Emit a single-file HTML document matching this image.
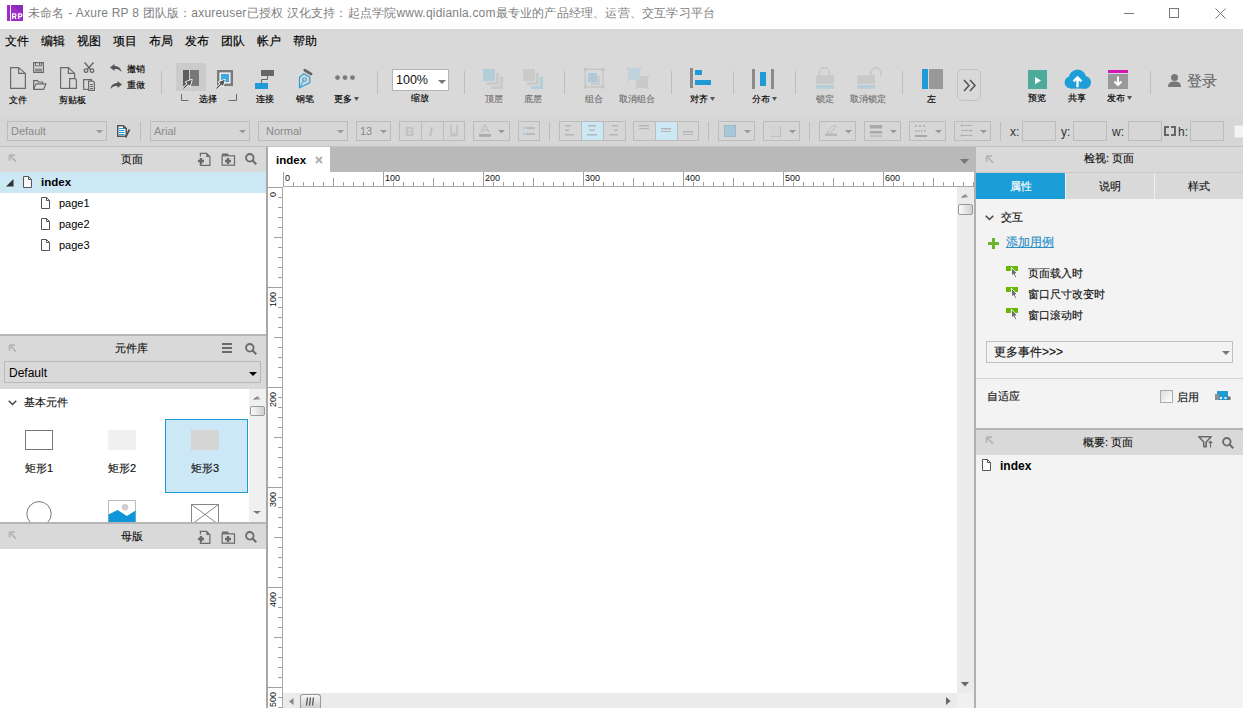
<!DOCTYPE html><html><head><meta charset="utf-8"><style>
html,body{margin:0;padding:0}
body{width:1243px;height:708px;overflow:hidden;position:relative;background:#d9d9d9;font-family:"Liberation Sans",sans-serif;color:#000}
.t{position:absolute;white-space:nowrap;line-height:1}
svg{display:block}
</style></head><body>
<div style="position:absolute;left:0px;top:0px;width:1243px;height:29px;background:#fff"></div>
<svg style="position:absolute;left:7px;top:5px;" width="16" height="16" viewBox="0 0 16 16"><rect x="0" y="0" width="3" height="16" fill="#9e2cc8"/><rect x="4" y="0" width="12" height="16" fill="#a02cc8"/><path d="M4.5 0H16V8Z" fill="#8a2bbd"/><path d="M5.6 14V8.8H7.6Q9 8.8 9 10.3Q9 11.7 7.6 11.7H5.6M7.6 11.7L9 14M11.6 14V8.8H13.4Q14.8 8.8 14.8 10.3Q14.8 11.7 13.4 11.7H11.6" fill="none" stroke="#fff" stroke-width="1.3"/></svg>
<div class="t" style="left:28px;top:7px;font-size:12px;color:#7f7f7f;letter-spacing:0.2px">未命名 - Axure RP 8 团队版：axureuser已授权 汉化支持：起点学院www.qidianla.com最专业的产品经理、运营、交互学习平台</div>
<div style="position:absolute;left:1124px;top:13px;width:10px;height:1px;background:#777"></div>
<div style="position:absolute;left:1169px;top:8px;width:10px;height:10px;box-sizing:border-box;border:1px solid #777"></div>
<svg style="position:absolute;left:1215px;top:8px;" width="11" height="11" viewBox="0 0 11 11"><path d="M0.5 0.5L10.5 10.5M10.5 0.5L0.5 10.5" stroke="#777" stroke-width="1"/></svg>
<div class="t" style="left:5px;top:35px;font-size:12px;-webkit-text-stroke:0.15px #000">文件</div>
<div class="t" style="left:41px;top:35px;font-size:12px;-webkit-text-stroke:0.15px #000">编辑</div>
<div class="t" style="left:77px;top:35px;font-size:12px;-webkit-text-stroke:0.15px #000">视图</div>
<div class="t" style="left:113px;top:35px;font-size:12px;-webkit-text-stroke:0.15px #000">项目</div>
<div class="t" style="left:149px;top:35px;font-size:12px;-webkit-text-stroke:0.15px #000">布局</div>
<div class="t" style="left:185px;top:35px;font-size:12px;-webkit-text-stroke:0.15px #000">发布</div>
<div class="t" style="left:221px;top:35px;font-size:12px;-webkit-text-stroke:0.15px #000">团队</div>
<div class="t" style="left:257px;top:35px;font-size:12px;-webkit-text-stroke:0.15px #000">帐户</div>
<div class="t" style="left:293px;top:35px;font-size:12px;-webkit-text-stroke:0.15px #000">帮助</div>
<svg style="position:absolute;left:10px;top:67px;" width="17" height="23" viewBox="0 0 17 23"><path d="M0.6 0.6H8.6L15.4 6.4V21.4H0.6Z M8.6 0.6V6.4H15.4" fill="none" stroke="#6a6a6a" stroke-width="1.2" stroke-linejoin="round"/></svg>
<svg style="position:absolute;left:33px;top:62px;" width="11" height="11" viewBox="0 0 11 11"><path d="M0.6 0.6H10.4V10.4H0.6Z" fill="none" stroke="#6a6a6a" stroke-width="1.2"/><path d="M2.5 1V3.8H8.5V1" fill="none" stroke="#6a6a6a" stroke-width="1"/><rect x="6" y="1" width="1.2" height="2" fill="#6a6a6a"/><rect x="2" y="6.5" width="7" height="3" fill="#8c8c8c"/></svg>
<svg style="position:absolute;left:33px;top:80px;" width="14" height="10" viewBox="0 0 14 10"><path d="M0.6 9.4V0.6H4.4L5.4 2H9.6V3.6" fill="none" stroke="#6a6a6a" stroke-width="1.2"/><path d="M0.6 9.4L2.8 3.8H13L10.6 9.4Z" fill="none" stroke="#6a6a6a" stroke-width="1.2" stroke-linejoin="round"/></svg>
<div class="t" style="left:9px;top:96px;font-size:9px;color:#000;-webkit-text-stroke:0.15px #000">文件</div>
<svg style="position:absolute;left:60px;top:67px;" width="18" height="23" viewBox="0 0 18 23"><path d="M0.6 21.4V0.6H8.4L14.6 6.4V11" fill="none" stroke="#6a6a6a" stroke-width="1.2"/><path d="M8.4 0.6V6.4H14.6" fill="none" stroke="#6a6a6a" stroke-width="1.2"/><path d="M0.6 21.4H9" fill="none" stroke="#6a6a6a" stroke-width="1.2"/><path d="M9.6 11.6H15.2L16.4 12.8V21.4H9.6Z" fill="#d9d9d9" stroke="#6a6a6a" stroke-width="1.2"/></svg>
<svg style="position:absolute;left:83px;top:62px;" width="12" height="11" viewBox="0 0 12 11"><path d="M1.5 0.5L7.5 7.2M10.5 0.5L4.5 7.2" stroke="#6a6a6a" stroke-width="1.5" fill="none"/><circle cx="3" cy="8.6" r="1.8" fill="none" stroke="#6a6a6a" stroke-width="1.3"/><circle cx="9" cy="8.6" r="1.8" fill="none" stroke="#6a6a6a" stroke-width="1.3"/></svg>
<svg style="position:absolute;left:83px;top:79px;" width="12" height="12" viewBox="0 0 12 12"><path d="M0.6 10.4V0.6H8.4V2" fill="none" stroke="#6a6a6a" stroke-width="1.2"/><path d="M0.6 10.4H5" fill="none" stroke="#6a6a6a" stroke-width="1.2"/><path d="M5.6 2.2H10L11.4 3.6V11.4H5.6Z" fill="#d9d9d9" stroke="#6a6a6a" stroke-width="1.2"/><path d="M7 5.5H10M7 7.5H10M7 9.5H10" stroke="#6a6a6a" stroke-width="1"/></svg>
<div class="t" style="left:59px;top:96px;font-size:9px;color:#000;-webkit-text-stroke:0.15px #000">剪贴板</div>
<svg style="position:absolute;left:110px;top:64px;" width="12" height="8" viewBox="0 0 12 8"><path d="M0 3.5L4.5 0V2C8 2 11 4 11.5 8C9.5 5.5 7.5 5 4.5 5V7Z" fill="#555"/></svg>
<div class="t" style="left:127px;top:65px;font-size:9px;color:#000;-webkit-text-stroke:0.15px #000">撤销</div>
<svg style="position:absolute;left:110px;top:81px;" width="12" height="8" viewBox="0 0 12 8"><path d="M12 3.5L7.5 0V2C4 2 1 4 0.5 8C2.5 5.5 4.5 5 7.5 5V7Z" fill="#555"/></svg>
<div class="t" style="left:127px;top:81px;font-size:9px;color:#000;-webkit-text-stroke:0.15px #000">重做</div>
<div style="position:absolute;left:161px;top:71px;width:1px;height:23px;background:#bdbdbd"></div>
<div style="position:absolute;left:176px;top:63px;width:30px;height:28px;background:#cbcbcb"></div>
<svg style="position:absolute;left:182px;top:69px;" width="18" height="21" viewBox="0 0 18 21"><rect x="1" y="1" width="6" height="16" fill="#5c5c5c"/><rect x="8" y="1" width="9" height="16" fill="#777"/><path d="M1.5 19.5L7 14" stroke="#fff" stroke-width="2.6"/><path d="M9.8 10.8L3.8 13L8 17Z" fill="#fff" stroke="#fff" stroke-width="1.6" stroke-linejoin="round"/><path d="M1.5 19.5L7 14" stroke="#555" stroke-width="1.3"/><path d="M9.8 10.8L3.8 13L8 17Z" fill="#555"/></svg>
<svg style="position:absolute;left:215px;top:69px;" width="20" height="21" viewBox="0 0 20 21"><rect x="3.2" y="2.2" width="13.6" height="13.6" fill="#ececec" stroke="#7a7a7a" stroke-width="2.4"/><rect x="6" y="5" width="8" height="8" fill="#3ea8dc"/><path d="M1.5 19.5L7 14" stroke="#fff" stroke-width="2.6"/><path d="M9.8 10.8L3.8 13L8 17Z" fill="#fff" stroke="#fff" stroke-width="1.6" stroke-linejoin="round"/><path d="M1.5 19.5L7 14" stroke="#555" stroke-width="1.3"/><path d="M9.8 10.8L3.8 13L8 17Z" fill="#555"/></svg>
<svg style="position:absolute;left:181px;top:94px;" width="56" height="8" viewBox="0 0 56 8"><path d="M0.5 0V6.5H7.5 M55.5 0V6.5H47.5" fill="none" stroke="#6a6a6a"/></svg>
<div class="t" style="left:199px;top:95px;font-size:9px;color:#000;-webkit-text-stroke:0.15px #000">选择</div>
<svg style="position:absolute;left:255px;top:70px;" width="20" height="19" viewBox="0 0 20 19"><rect x="6" y="0" width="13" height="6" fill="#666"/><path d="M12.5 6V9.5H6.5V13" fill="none" stroke="#666" stroke-width="1"/><rect x="0" y="13" width="13" height="6" fill="#1e9ad6"/></svg>
<div class="t" style="left:256px;top:95px;font-size:9px;color:#000;-webkit-text-stroke:0.15px #000">连接</div>
<svg style="position:absolute;left:298px;top:68px;" width="16" height="21" viewBox="0 0 16 21"><path d="M6.8 2.2L13 6" stroke="#666" stroke-width="2.8" stroke-linecap="round"/><path d="M5.8 5.8L11.8 9.3V14.6L1.5 19.7V9.3Z" fill="none" stroke="#2c9fda" stroke-width="1.2" stroke-linejoin="round"/><circle cx="6.5" cy="11.5" r="1.8" fill="none" stroke="#2c9fda" stroke-width="1.1"/><path d="M2 19.2L5.4 12.9" stroke="#2c9fda" stroke-width="1"/></svg>
<div class="t" style="left:296px;top:95px;font-size:9px;color:#000;-webkit-text-stroke:0.15px #000">钢笔</div>
<svg style="position:absolute;left:334px;top:75px;" width="22" height="6" viewBox="0 0 22 6"><circle cx="3.5" cy="2.6" r="2.4" fill="#7a7a7a"/><circle cx="11" cy="2.6" r="2.4" fill="#7a7a7a"/><circle cx="18.5" cy="2.6" r="2.4" fill="#7a7a7a"/></svg>
<div class="t" style="left:334px;top:95px;font-size:9px;color:#000;-webkit-text-stroke:0.15px #000">更多</div>
<svg style="position:absolute;left:354px;top:97px;" width="5" height="4" viewBox="0 0 5 4"><path d="M0 0H5L2.5 4Z" fill="#555"/></svg>
<div style="position:absolute;left:377px;top:71px;width:1px;height:23px;background:#bdbdbd"></div>
<div style="position:absolute;left:392px;top:69px;width:57px;height:22px;box-sizing:border-box;background:#fff;border:1px solid #b4b4b4"></div>
<div class="t" style="left:396px;top:74px;font-size:12.5px;color:#111">100%</div>
<svg style="position:absolute;left:438px;top:80px;" width="8" height="4" viewBox="0 0 8 4"><path d="M0 0H8L4 4Z" fill="#777"/></svg>
<div class="t" style="left:411px;top:94px;font-size:9px;color:#000;-webkit-text-stroke:0.15px #000">缩放</div>
<div style="position:absolute;left:464px;top:71px;width:1px;height:23px;background:#bdbdbd"></div>
<svg style="position:absolute;left:482px;top:68px;" width="23" height="23" viewBox="0 0 23 23"><rect x="9" y="9" width="12" height="12" fill="#cacaca"/><rect x="4.5" y="4.5" width="13" height="13" fill="#cacaca" stroke="#d9d9d9" stroke-width="1"/><rect x="0.5" y="0.5" width="13" height="13" fill="#b3cdd9" stroke="#d9d9d9" stroke-width="1"/></svg>
<div class="t" style="left:485px;top:95px;font-size:9px;color:#6a6a6a;-webkit-text-stroke:0.1px #6a6a6a">顶层</div>
<svg style="position:absolute;left:522px;top:68px;" width="23" height="23" viewBox="0 0 23 23"><rect x="9" y="9" width="12" height="12" fill="#b3cdd9"/><rect x="4.5" y="4.5" width="13" height="13" fill="#cacaca" stroke="#d9d9d9" stroke-width="1"/><rect x="0.5" y="0.5" width="13" height="13" fill="#cacaca" stroke="#d9d9d9" stroke-width="1"/></svg>
<div class="t" style="left:524px;top:95px;font-size:9px;color:#6a6a6a;-webkit-text-stroke:0.1px #6a6a6a">底层</div>
<div style="position:absolute;left:564px;top:71px;width:1px;height:23px;background:#bdbdbd"></div>
<svg style="position:absolute;left:583px;top:67px;" width="22" height="22" viewBox="0 0 22 22"><rect x="2.2" y="2.4" width="17.8" height="17.6" fill="none" stroke="#c4c4c4" stroke-width="1.3"/><circle cx="2.2" cy="2.4" r="1.7" fill="#c4c4c4"/><circle cx="20" cy="2.4" r="1.7" fill="#c4c4c4"/><circle cx="2.2" cy="20" r="1.7" fill="#c4c4c4"/><circle cx="20" cy="20" r="1.7" fill="#c4c4c4"/><rect x="8" y="9" width="9" height="9" fill="#cbcbcb"/><rect x="5" y="6" width="9" height="9" fill="#aec9d8"/></svg>
<div class="t" style="left:585px;top:95px;font-size:9px;color:#6a6a6a;-webkit-text-stroke:0.1px #6a6a6a">组合</div>
<svg style="position:absolute;left:626px;top:66px;" width="24" height="24" viewBox="0 0 24 24"><rect x="10" y="10" width="12" height="12" fill="#cacaca"/><rect x="2" y="2" width="12" height="12" fill="#c0d3dc"/><g fill="#c6c6c6"><circle cx="2" cy="2" r="1"/><circle cx="14" cy="2" r="1"/><circle cx="2" cy="14" r="1"/><circle cx="14" cy="14" r="1"/><circle cx="10" cy="10" r="1"/><circle cx="22" cy="10" r="1"/><circle cx="10" cy="22" r="1"/><circle cx="22" cy="22" r="1"/></g></svg>
<div class="t" style="left:619px;top:95px;font-size:9px;color:#6a6a6a;-webkit-text-stroke:0.1px #6a6a6a">取消组合</div>
<div style="position:absolute;left:671px;top:71px;width:1px;height:23px;background:#bdbdbd"></div>
<svg style="position:absolute;left:689px;top:68px;" width="23" height="21" viewBox="0 0 23 21"><rect x="1" y="0" width="3" height="20" fill="#8a8a8a"/><rect x="6" y="2" width="7" height="5" fill="#1e9ad6"/><rect x="6" y="12" width="16" height="5" fill="#1e9ad6"/></svg>
<div class="t" style="left:690px;top:95px;font-size:9px;color:#000;-webkit-text-stroke:0.15px #000">对齐</div>
<svg style="position:absolute;left:710px;top:97px;" width="5" height="4" viewBox="0 0 5 4"><path d="M0 0H5L2.5 4Z" fill="#555"/></svg>
<div style="position:absolute;left:733px;top:71px;width:1px;height:23px;background:#bdbdbd"></div>
<svg style="position:absolute;left:752px;top:69px;" width="23" height="21" viewBox="0 0 23 21"><rect x="0" y="0" width="3" height="20" fill="#8a8a8a"/><rect x="8" y="3" width="6" height="14" fill="#1e9ad6"/><rect x="19" y="0" width="3" height="20" fill="#8a8a8a"/></svg>
<div class="t" style="left:752px;top:95px;font-size:9px;color:#000;-webkit-text-stroke:0.15px #000">分布</div>
<svg style="position:absolute;left:772px;top:97px;" width="5" height="4" viewBox="0 0 5 4"><path d="M0 0H5L2.5 4Z" fill="#555"/></svg>
<div style="position:absolute;left:795px;top:71px;width:1px;height:23px;background:#bdbdbd"></div>
<svg style="position:absolute;left:815px;top:67px;" width="20" height="22" viewBox="0 0 20 22"><path d="M4.4 8.4V5.8A5 5 0 0 1 14.4 5.8V8.4" fill="none" stroke="#c8c8c8" stroke-width="1.8"/><rect x="1" y="8.2" width="18" height="8.6" fill="#c9c9c9"/><rect x="1" y="18" width="18" height="3.7" fill="#b3cdd9"/></svg>
<div class="t" style="left:816px;top:95px;font-size:9px;color:#6a6a6a;-webkit-text-stroke:0.1px #6a6a6a">锁定</div>
<svg style="position:absolute;left:856px;top:67px;" width="28" height="22" viewBox="0 0 28 22"><path d="M15 8.4V5.8A5 5 0 0 1 25 5.8V9" fill="none" stroke="#c8c8c8" stroke-width="1.8"/><rect x="1.3" y="8.2" width="17.7" height="8.6" fill="#c9c9c9"/><rect x="1.3" y="18" width="17.7" height="3.7" fill="#b3cdd9"/></svg>
<div class="t" style="left:850px;top:95px;font-size:9px;color:#6a6a6a;-webkit-text-stroke:0.1px #6a6a6a">取消锁定</div>
<div style="position:absolute;left:902px;top:71px;width:1px;height:23px;background:#bdbdbd"></div>
<svg style="position:absolute;left:922px;top:69px;" width="22" height="20" viewBox="0 0 22 20"><rect x="0" y="0" width="6" height="20" fill="#1e9ad6"/><rect x="7" y="0" width="14" height="20" fill="#999"/></svg>
<div class="t" style="left:927px;top:95px;font-size:9px;color:#000;-webkit-text-stroke:0.15px #000">左</div>
<div style="position:absolute;left:957px;top:69px;width:24px;height:32px;box-sizing:border-box;border:1px solid #c2c2c2;border-radius:5px"></div>
<svg style="position:absolute;left:963px;top:79px;" width="14" height="13" viewBox="0 0 14 13"><path d="M1 1L6 6.5L1 12M7 1L12 6.5L7 12" fill="none" stroke="#555" stroke-width="1.6"/></svg>
<svg style="position:absolute;left:1028px;top:70px;" width="19" height="19" viewBox="0 0 19 19"><rect width="19" height="19" fill="#4cab9b"/><path d="M7 7V14.2L13 10.6Z" fill="#fff"/></svg>
<div class="t" style="left:1028px;top:94px;font-size:9px;color:#000;-webkit-text-stroke:0.15px #000">预览</div>
<svg style="position:absolute;left:1064px;top:69px;" width="28" height="21" viewBox="0 0 28 21"><g fill="#1e9ed8"><circle cx="13.5" cy="9" r="8.6"/><circle cx="6.8" cy="13.4" r="6.2"/><circle cx="20.6" cy="13.4" r="6.4"/><rect x="6.8" y="12" width="14" height="7.6"/></g><path d="M13.5 18.2V8.5M9.6 12.4L13.5 8.4L17.4 12.4" fill="none" stroke="#fff" stroke-width="2.3"/></svg>
<div class="t" style="left:1068px;top:94px;font-size:9px;color:#000;-webkit-text-stroke:0.15px #000">共享</div>
<svg style="position:absolute;left:1108px;top:70px;" width="20" height="19" viewBox="0 0 20 19"><rect width="20" height="3" fill="#d616b6"/><rect y="4" width="20" height="15" fill="#999"/><path d="M10 6.5V15M6.5 11.5L10 15L13.5 11.5" fill="none" stroke="#fff" stroke-width="2"/></svg>
<div class="t" style="left:1107px;top:94px;font-size:9px;color:#000;-webkit-text-stroke:0.15px #000">发布</div>
<svg style="position:absolute;left:1127px;top:96px;" width="5" height="4" viewBox="0 0 5 4"><path d="M0 0H5L2.5 4Z" fill="#555"/></svg>
<div style="position:absolute;left:1150px;top:71px;width:1px;height:23px;background:#bdbdbd"></div>
<svg style="position:absolute;left:1168px;top:74px;" width="13" height="13" viewBox="0 0 13 13"><circle cx="6.5" cy="3.5" r="3.5" fill="#777"/><path d="M0 13C0 8.5 3 7.5 6.5 7.5S13 8.5 13 13Z" fill="#777"/></svg>
<div class="t" style="left:1187px;top:73px;font-size:15px;color:#666;-webkit-text-stroke-width:0.15px">登录</div>
<div style="position:absolute;left:0px;top:116px;width:1243px;height:30px;background:#d6d6d6"></div>
<div style="position:absolute;left:0px;top:146px;width:1243px;height:1px;background:#c2c2c2"></div>
<div style="position:absolute;left:7px;top:121px;width:100px;height:20px;box-sizing:border-box;border:1px solid #bcbcbc"></div>
<div class="t" style="left:11px;top:126px;font-size:11px;color:#8a8a8a">Default</div>
<svg style="position:absolute;left:96px;top:130px;" width="7" height="4" viewBox="0 0 7 4"><path d="M0 0H7L3.5 3.5Z" fill="#9a9a9a"/></svg>
<svg style="position:absolute;left:117px;top:125px;" width="14" height="13" viewBox="0 0 14 13"><path d="M0.75 0.75H6.5L9.25 3.5V11.25H0.75Z" fill="#fff" stroke="#555" stroke-width="1.5"/><path d="M6 0L10 4H6Z" fill="#555"/><path d="M2 3.5H7.5M2 5.5H7.5M2 7.5H7.5M2 9.5H7.5" stroke="#1e9ad6" stroke-width="1.2"/><path d="M12.5 4.5L8.5 12.5" stroke="#555" stroke-width="1.8"/></svg>
<div style="position:absolute;left:140px;top:122px;width:1px;height:19px;background:#bdbdbd"></div>
<div style="position:absolute;left:150px;top:121px;width:100px;height:20px;box-sizing:border-box;border:1px solid #bcbcbc"></div>
<div class="t" style="left:154px;top:126px;font-size:11px;color:#8a8a8a">Arial</div>
<svg style="position:absolute;left:239px;top:130px;" width="7" height="4" viewBox="0 0 7 4"><path d="M0 0H7L3.5 3.5Z" fill="#9a9a9a"/></svg>
<div style="position:absolute;left:258px;top:121px;width:90px;height:20px;box-sizing:border-box;border:1px solid #bcbcbc"></div>
<div class="t" style="left:266px;top:126px;font-size:11px;color:#8a8a8a">Normal</div>
<svg style="position:absolute;left:337px;top:130px;" width="7" height="4" viewBox="0 0 7 4"><path d="M0 0H7L3.5 3.5Z" fill="#9a9a9a"/></svg>
<div style="position:absolute;left:356px;top:121px;width:35px;height:20px;box-sizing:border-box;border:1px solid #bcbcbc"></div>
<div class="t" style="left:360px;top:126px;font-size:11px;color:#8a8a8a">13</div>
<svg style="position:absolute;left:380px;top:130px;" width="7" height="4" viewBox="0 0 7 4"><path d="M0 0H7L3.5 3.5Z" fill="#9a9a9a"/></svg>
<div style="position:absolute;left:399px;top:121px;width:66px;height:20px;box-sizing:border-box;border:1px solid #bcbcbc"></div>
<div style="position:absolute;left:421px;top:121px;width:1px;height:20px;background:#bcbcbc"></div>
<div style="position:absolute;left:443px;top:121px;width:1px;height:20px;background:#bcbcbc"></div>
<div class="t" style="left:405px;top:125px;font-size:13px;font-weight:bold;color:#c0c0c0">B</div>
<div class="t" style="left:429px;top:125px;font-size:13px;font-style:italic;font-weight:bold;color:#c0c0c0">I</div>
<svg style="position:absolute;left:450px;top:125px;" width="8" height="12" viewBox="0 0 8 12"><path d="M1 0V6.5A3 3 0 0 0 7 6.5V0" fill="none" stroke="#c0c0c0" stroke-width="1.6"/><rect x="0" y="10" width="8" height="1.5" fill="#c0c0c0"/></svg>
<div style="position:absolute;left:473px;top:121px;width:37px;height:20px;box-sizing:border-box;border:1px solid #bcbcbc"></div>
<svg style="position:absolute;left:479px;top:124px;" width="13" height="13" viewBox="0 0 13 13"><path d="M2 8.6L5.6 1H6.4L10 8.6M3.4 6H8.6" fill="none" stroke="#bdbdbd" stroke-width="1.1"/><rect x="0" y="10" width="12" height="2.8" fill="#ababab"/></svg>
<svg style="position:absolute;left:498px;top:130px;" width="7" height="4" viewBox="0 0 7 4"><path d="M0 0H7L3.5 3.5Z" fill="#9a9a9a"/></svg>
<div style="position:absolute;left:518px;top:121px;width:22px;height:20px;box-sizing:border-box;border:1px solid #bcbcbc"></div>
<svg style="position:absolute;left:523px;top:127px;" width="12" height="9" viewBox="0 0 12 9"><rect x="0" y="0" width="2" height="2" fill="#9fcde6"/><rect x="0" y="6" width="2" height="2" fill="#9fcde6"/><rect x="3" y="0.2" width="9" height="1.6" fill="#b5b5b5"/><rect x="3" y="6.2" width="9" height="1.6" fill="#b5b5b5"/></svg>
<div style="position:absolute;left:549px;top:122px;width:1px;height:19px;background:#bdbdbd"></div>
<div style="position:absolute;left:559px;top:121px;width:67px;height:20px;box-sizing:border-box;border:1px solid #bcbcbc"></div>
<div style="position:absolute;left:582px;top:122px;width:21px;height:18px;background:#cce8f5"></div>
<div style="position:absolute;left:581px;top:121px;width:1px;height:20px;background:#bcbcbc"></div>
<div style="position:absolute;left:603px;top:121px;width:1px;height:20px;background:#bcbcbc"></div>
<svg style="position:absolute;left:565px;top:125px;" width="10" height="11" viewBox="0 0 10 11"><rect x="0" y="0" width="6" height="1.5" fill="#b5b5b5"/><rect x="0" y="4.5" width="4" height="1.5" fill="#b5b5b5"/><rect x="0" y="9" width="9" height="1.5" fill="#b5b5b5"/></svg>
<svg style="position:absolute;left:587px;top:125px;" width="10" height="11" viewBox="0 0 10 11"><rect x="1" y="0" width="8" height="1.5" fill="#b5b5b5"/><rect x="2.5" y="4.5" width="5" height="1.5" fill="#b5b5b5"/><rect x="0" y="9" width="10" height="1.5" fill="#b5b5b5"/></svg>
<svg style="position:absolute;left:609px;top:125px;" width="10" height="11" viewBox="0 0 10 11"><rect x="3" y="0" width="6" height="1.5" fill="#b5b5b5"/><rect x="5" y="4.5" width="4" height="1.5" fill="#b5b5b5"/><rect x="0" y="9" width="9" height="1.5" fill="#b5b5b5"/></svg>
<div style="position:absolute;left:633px;top:121px;width:66px;height:20px;box-sizing:border-box;border:1px solid #bcbcbc"></div>
<div style="position:absolute;left:656px;top:122px;width:21px;height:18px;background:#cce8f5"></div>
<div style="position:absolute;left:655px;top:121px;width:1px;height:20px;background:#bcbcbc"></div>
<div style="position:absolute;left:677px;top:121px;width:1px;height:20px;background:#bcbcbc"></div>
<svg style="position:absolute;left:639px;top:125px;" width="10" height="4" viewBox="0 0 10 4"><rect y="0" width="10" height="1.5" fill="#b5b5b5"/><rect y="3" width="10" height="1.5" fill="#b5b5b5"/></svg>
<svg style="position:absolute;left:661px;top:128px;" width="10" height="4" viewBox="0 0 10 4"><rect y="0" width="10" height="1.5" fill="#b5b5b5"/><rect y="3" width="10" height="1.5" fill="#b5b5b5"/></svg>
<svg style="position:absolute;left:683px;top:131px;" width="10" height="4" viewBox="0 0 10 4"><rect y="0" width="10" height="1.5" fill="#b5b5b5"/><rect y="3" width="10" height="1.5" fill="#b5b5b5"/></svg>
<div style="position:absolute;left:708px;top:122px;width:1px;height:19px;background:#bdbdbd"></div>
<div style="position:absolute;left:718px;top:121px;width:37px;height:20px;box-sizing:border-box;border:1px solid #bcbcbc"></div>
<div style="position:absolute;left:724px;top:125px;width:12px;height:12px;box-sizing:border-box;background:#a9c7d8;border:1px solid #9cb9c9"></div>
<svg style="position:absolute;left:744px;top:130px;" width="7" height="4" viewBox="0 0 7 4"><path d="M0 0H7L3.5 3.5Z" fill="#9a9a9a"/></svg>
<div style="position:absolute;left:763px;top:121px;width:37px;height:20px;box-sizing:border-box;border:1px solid #bcbcbc"></div>
<div style="position:absolute;left:770px;top:125px;width:10px;height:11px;background:#d3d3d3;box-shadow:1px 1px 1px #c0c0c0"></div>
<svg style="position:absolute;left:789px;top:130px;" width="7" height="4" viewBox="0 0 7 4"><path d="M0 0H7L3.5 3.5Z" fill="#9a9a9a"/></svg>
<div style="position:absolute;left:809px;top:122px;width:1px;height:19px;background:#bdbdbd"></div>
<div style="position:absolute;left:819px;top:121px;width:37px;height:20px;box-sizing:border-box;border:1px solid #bcbcbc"></div>
<svg style="position:absolute;left:825px;top:124px;" width="13" height="12" viewBox="0 0 13 12"><path d="M2 8L9 1L11 3L4 10Z" fill="none" stroke="#bdbdbd" stroke-width="1"/><rect x="0" y="9.5" width="12" height="2.5" fill="#b9b9b9"/></svg>
<svg style="position:absolute;left:845px;top:130px;" width="7" height="4" viewBox="0 0 7 4"><path d="M0 0H7L3.5 3.5Z" fill="#9a9a9a"/></svg>
<div style="position:absolute;left:864px;top:121px;width:37px;height:20px;box-sizing:border-box;border:1px solid #bcbcbc"></div>
<svg style="position:absolute;left:870px;top:125px;" width="12" height="12" viewBox="0 0 12 12"><rect y="0" width="12" height="3.5" fill="#a9a9a9"/><rect y="6" width="12" height="2.5" fill="#a9a9a9"/><rect y="10.5" width="12" height="1" fill="#a9a9a9"/></svg>
<svg style="position:absolute;left:890px;top:130px;" width="7" height="4" viewBox="0 0 7 4"><path d="M0 0H7L3.5 3.5Z" fill="#9a9a9a"/></svg>
<div style="position:absolute;left:909px;top:121px;width:37px;height:20px;box-sizing:border-box;border:1px solid #bcbcbc"></div>
<svg style="position:absolute;left:915px;top:125px;" width="12" height="12" viewBox="0 0 12 12"><path d="M0 1H2M4 1H6M8 1H10M0 6H1.5M3 6H4.5M6 6H7.5M9 6H10.5" stroke="#a9a9a9" stroke-width="1.5"/><rect y="10" width="12" height="2" fill="#a9a9a9"/></svg>
<svg style="position:absolute;left:935px;top:130px;" width="7" height="4" viewBox="0 0 7 4"><path d="M0 0H7L3.5 3.5Z" fill="#9a9a9a"/></svg>
<div style="position:absolute;left:954px;top:121px;width:37px;height:20px;box-sizing:border-box;border:1px solid #bcbcbc"></div>
<svg style="position:absolute;left:960px;top:124px;" width="14" height="13" viewBox="0 0 14 13"><path d="M1 1.5H12M1 6.5H12M1 11.5H12" stroke="#b0b0b0" stroke-width="1"/><path d="M0 1.5L2.5 0V3Z M13 6.5L10.5 5V8Z M0 11.5L2.5 10V13Z M13 11.5L10.5 10V13Z" fill="#b0b0b0"/></svg>
<svg style="position:absolute;left:980px;top:130px;" width="7" height="4" viewBox="0 0 7 4"><path d="M0 0H7L3.5 3.5Z" fill="#9a9a9a"/></svg>
<div style="position:absolute;left:1000px;top:122px;width:1px;height:19px;background:#bdbdbd"></div>
<div class="t" style="left:1010px;top:126px;font-size:12px;color:#333">x:</div>
<div style="position:absolute;left:1022px;top:121px;width:34px;height:20px;box-sizing:border-box;border:1px solid #bcbcbc"></div>
<div class="t" style="left:1061px;top:126px;font-size:12px;color:#333">y:</div>
<div style="position:absolute;left:1073px;top:121px;width:34px;height:20px;box-sizing:border-box;border:1px solid #bcbcbc"></div>
<div class="t" style="left:1112px;top:126px;font-size:12px;color:#333">w:</div>
<div style="position:absolute;left:1128px;top:121px;width:34px;height:20px;box-sizing:border-box;border:1px solid #bcbcbc"></div>
<svg style="position:absolute;left:1164px;top:126px;" width="12" height="10" viewBox="0 0 12 10"><path d="M5 1H1V9H5M7 1H11V9H7" fill="none" stroke="#666" stroke-width="2"/></svg>
<div class="t" style="left:1178px;top:126px;font-size:12px;color:#333">h:</div>
<div style="position:absolute;left:1190px;top:121px;width:34px;height:20px;box-sizing:border-box;border:1px solid #bcbcbc"></div>
<div style="position:absolute;left:1234px;top:125px;width:12px;height:11px;background:#f4f4f4;border:1px solid #e0e0e0"></div>
<div style="position:absolute;left:0px;top:147px;width:266px;height:25px;background:#d9d9d9"></div>
<svg style="position:absolute;left:8px;top:154px;" width="10" height="10" viewBox="0 0 10 10"><path d="M1.5 1.1L8 7.6M1.5 1.1H7M1.5 1.1V6.8" fill="none" stroke="#b4b4b4" stroke-width="1.7"/></svg>
<div class="t" style="left:121px;top:154px;font-size:11px;color:#111;-webkit-text-stroke-width:0.15px">页面</div>
<svg style="position:absolute;left:197px;top:152px;" width="15" height="15" viewBox="0 0 15 15"><path d="M3.4 4.6V1.4H9.6L12.9 4.7V13.3H3.4V12.1" fill="none" stroke="#6a6a6a" stroke-width="1.2"/><path d="M9.3 1.5V5H12.8Z" fill="#6a6a6a"/><path d="M1 9H7M4 6V12" stroke="#6a6a6a" stroke-width="2.4"/></svg>
<svg style="position:absolute;left:220px;top:152px;" width="17" height="15" viewBox="0 0 17 15"><path d="M2 1.4H8L9.1 3.6H2Z" fill="#6a6a6a"/><rect x="2.1" y="3.8" width="12.4" height="9.4" fill="none" stroke="#6a6a6a" stroke-width="1.2"/><path d="M5 9H11M8 6V12" stroke="#6a6a6a" stroke-width="2.4"/></svg>
<svg style="position:absolute;left:245px;top:153px;" width="12" height="12" viewBox="0 0 12 12"><circle cx="4.8" cy="4.8" r="3.8" fill="none" stroke="#6b6b6b" stroke-width="1.8"/><path d="M7.5 7.5L11.3 11.3" stroke="#6b6b6b" stroke-width="2"/></svg>
<div style="position:absolute;left:0px;top:172px;width:266px;height:162px;background:#fff"></div>
<div style="position:absolute;left:0px;top:172px;width:266px;height:21px;background:#cce8f5"></div>
<svg style="position:absolute;left:6px;top:179px;" width="8" height="8" viewBox="0 0 8 8"><path d="M7.5 0V7.5H0Z" fill="#333"/></svg>
<svg style="position:absolute;left:23px;top:176px;" width="10" height="12" viewBox="0 0 10 12"><path d="M0.5 0.5H5.5L8.5 3.5V11.5H0.5Z" fill="#fff" stroke="#555"/><path d="M5.5 0.5V3.5H8.5" fill="none" stroke="#555"/></svg>
<div class="t" style="left:41px;top:177px;font-size:11.5px;font-weight:bold">index</div>
<svg style="position:absolute;left:41px;top:197px;" width="10" height="12" viewBox="0 0 10 12"><path d="M0.5 0.5H5.5L8.5 3.5V11.5H0.5Z" fill="#fff" stroke="#555"/><path d="M5.5 0.5V3.5H8.5" fill="none" stroke="#555"/></svg>
<div class="t" style="left:59px;top:198px;font-size:11px">page1</div>
<svg style="position:absolute;left:41px;top:218px;" width="10" height="12" viewBox="0 0 10 12"><path d="M0.5 0.5H5.5L8.5 3.5V11.5H0.5Z" fill="#fff" stroke="#555"/><path d="M5.5 0.5V3.5H8.5" fill="none" stroke="#555"/></svg>
<div class="t" style="left:59px;top:219px;font-size:11px">page2</div>
<svg style="position:absolute;left:41px;top:239px;" width="10" height="12" viewBox="0 0 10 12"><path d="M0.5 0.5H5.5L8.5 3.5V11.5H0.5Z" fill="#fff" stroke="#555"/><path d="M5.5 0.5V3.5H8.5" fill="none" stroke="#555"/></svg>
<div class="t" style="left:59px;top:240px;font-size:11px">page3</div>
<div style="position:absolute;left:0px;top:334px;width:266px;height:2px;background:#b5b5b5"></div>
<div style="position:absolute;left:0px;top:336px;width:266px;height:53px;background:#d9d9d9"></div>
<svg style="position:absolute;left:8px;top:344px;" width="10" height="10" viewBox="0 0 10 10"><path d="M1.5 1.1L8 7.6M1.5 1.1H7M1.5 1.1V6.8" fill="none" stroke="#b4b4b4" stroke-width="1.7"/></svg>
<div class="t" style="left:115px;top:343px;font-size:11px;color:#111;-webkit-text-stroke-width:0.15px">元件库</div>
<svg style="position:absolute;left:222px;top:343px;" width="10" height="10" viewBox="0 0 10 10"><path d="M0 1H10M0 5H10M0 9H10" stroke="#6b6b6b" stroke-width="1.8"/></svg>
<svg style="position:absolute;left:245px;top:343px;" width="12" height="12" viewBox="0 0 12 12"><circle cx="4.8" cy="4.8" r="3.8" fill="none" stroke="#6b6b6b" stroke-width="1.8"/><path d="M7.5 7.5L11.3 11.3" stroke="#6b6b6b" stroke-width="2"/></svg>
<div style="position:absolute;left:4px;top:361px;width:257px;height:22px;box-sizing:border-box;border:1px solid #b8b8b8;background:#d9d9d9"></div>
<div class="t" style="left:9px;top:367px;font-size:12px">Default</div>
<svg style="position:absolute;left:249px;top:372px;" width="8" height="4" viewBox="0 0 8 4"><path d="M0 0H8L4 4Z" fill="#000"/></svg>
<div style="position:absolute;left:0px;top:389px;width:250px;height:133px;background:#fff"></div>
<div style="position:absolute;left:249px;top:389px;width:17px;height:133px;background:#f0f0f0"></div>
<svg style="position:absolute;left:252px;top:395px;" width="10" height="5" viewBox="0 0 10 5"><path d="M1 4.5L5.5 1L9 4.5Z" fill="url(#ga)"/></svg>
<div style="position:absolute;left:250px;top:406px;width:15px;height:10px;box-sizing:border-box;border:1px solid #999;border-radius:2px;background:linear-gradient(90deg,#fafafa,#d0d0d0)"></div>
<svg style="position:absolute;left:252px;top:510px;" width="10" height="5" viewBox="0 0 10 5"><path d="M1 1L5 4L9 1Z" fill="#777"/></svg>
<svg style="position:absolute;left:8px;top:400px;" width="9" height="6" viewBox="0 0 9 6"><path d="M0.75 0.75L4.5 4.5L8.25 0.75" fill="none" stroke="#444" stroke-width="1.5"/></svg>
<div class="t" style="left:24px;top:397px;font-size:11px;color:#111;-webkit-text-stroke-width:0.15px">基本元件</div>
<div style="position:absolute;left:25px;top:430px;width:28px;height:20px;box-sizing:border-box;border:1px solid #777;background:#fff"></div>
<div style="position:absolute;left:108px;top:430px;width:28px;height:20px;background:#f0f0f0"></div>
<div style="position:absolute;left:165px;top:419px;width:83px;height:74px;box-sizing:border-box;border:1px solid #1a9bd7;background:#cce8f6"></div>
<div style="position:absolute;left:191px;top:430px;width:28px;height:20px;background:#d4d4d4"></div>
<div class="t" style="left:25px;top:463px;font-size:11px;color:#111;-webkit-text-stroke-width:0.15px">矩形1</div>
<div class="t" style="left:108px;top:463px;font-size:11px;color:#111;-webkit-text-stroke-width:0.15px">矩形2</div>
<div class="t" style="left:191px;top:463px;font-size:11px;color:#111;-webkit-text-stroke-width:0.15px">矩形3</div>
<svg style="position:absolute;left:26px;top:501px;" width="27" height="21" viewBox="0 0 27 21"><circle cx="13" cy="12.8" r="12.2" fill="#fff" stroke="#777"/></svg>
<svg style="position:absolute;left:108px;top:500px;" width="28" height="22" viewBox="0 0 28 22"><rect x="0.5" y="0.5" width="27" height="25" fill="#fff" stroke="#bbb"/><circle cx="17" cy="7.2" r="3.3" fill="#cfcfcf"/><path d="M0.5 14.4L9.6 9.9L18.8 16.1L27.5 10.5V22H0.5Z" fill="#0e96d8"/></svg>
<svg style="position:absolute;left:191px;top:504px;" width="28" height="18" viewBox="0 0 28 18"><rect x="0.5" y="0.5" width="27" height="20" fill="#fff" stroke="#888"/><path d="M0.5 0.5L27.5 20.5M27.5 0.5L0.5 20.5" stroke="#888"/></svg>
<div style="position:absolute;left:0px;top:522px;width:266px;height:2px;background:#b5b5b5"></div>
<div style="position:absolute;left:0px;top:524px;width:266px;height:25px;background:#d9d9d9"></div>
<svg style="position:absolute;left:8px;top:531px;" width="10" height="10" viewBox="0 0 10 10"><path d="M1.5 1.1L8 7.6M1.5 1.1H7M1.5 1.1V6.8" fill="none" stroke="#b4b4b4" stroke-width="1.7"/></svg>
<div class="t" style="left:121px;top:531px;font-size:11px;color:#111;-webkit-text-stroke-width:0.15px">母版</div>
<svg style="position:absolute;left:197px;top:530px;" width="15" height="15" viewBox="0 0 15 15"><path d="M3.4 4.6V1.4H9.6L12.9 4.7V13.3H3.4V12.1" fill="none" stroke="#6a6a6a" stroke-width="1.2"/><path d="M9.3 1.5V5H12.8Z" fill="#6a6a6a"/><path d="M1 9H7M4 6V12" stroke="#6a6a6a" stroke-width="2.4"/></svg>
<svg style="position:absolute;left:220px;top:530px;" width="17" height="15" viewBox="0 0 17 15"><path d="M2 1.4H8L9.1 3.6H2Z" fill="#6a6a6a"/><rect x="2.1" y="3.8" width="12.4" height="9.4" fill="none" stroke="#6a6a6a" stroke-width="1.2"/><path d="M5 9H11M8 6V12" stroke="#6a6a6a" stroke-width="2.4"/></svg>
<svg style="position:absolute;left:245px;top:531px;" width="12" height="12" viewBox="0 0 12 12"><circle cx="4.8" cy="4.8" r="3.8" fill="none" stroke="#6b6b6b" stroke-width="1.8"/><path d="M7.5 7.5L11.3 11.3" stroke="#6b6b6b" stroke-width="2"/></svg>
<div style="position:absolute;left:0px;top:549px;width:266px;height:159px;background:#fff"></div>
<div style="position:absolute;left:266px;top:147px;width:2px;height:561px;background:#a8a8a8"></div>
<div style="position:absolute;left:268px;top:147px;width:708px;height:25px;background:#b9b9b9"></div>
<div style="position:absolute;left:268px;top:147px;width:62px;height:25px;background:#fff"></div>
<div class="t" style="left:276px;top:155px;font-size:11.5px;font-weight:bold">index</div>
<svg style="position:absolute;left:315px;top:156px;" width="8" height="8" viewBox="0 0 8 8"><path d="M1 1L7 7M7 1L1 7" stroke="#b0b0b0" stroke-width="2"/></svg>
<svg style="position:absolute;left:960px;top:159px;" width="9" height="5" viewBox="0 0 9 5"><path d="M0 0H9L4.5 5Z" fill="#777"/></svg>
<div style="position:absolute;left:268px;top:172px;width:706px;height:536px;background:#fff"></div>
<svg style="position:absolute;left:268px;top:172px;" width="706" height="15" viewBox="0 0 706 15"><rect x="15" y="0" width="1" height="14" fill="#a0a0a0"/><rect x="25" y="10" width="1" height="4" fill="#a0a0a0"/><rect x="35" y="10" width="1" height="4" fill="#a0a0a0"/><rect x="45" y="10" width="1" height="4" fill="#a0a0a0"/><rect x="55" y="10" width="1" height="4" fill="#a0a0a0"/><rect x="65" y="6" width="1" height="8" fill="#a0a0a0"/><rect x="75" y="10" width="1" height="4" fill="#a0a0a0"/><rect x="85" y="10" width="1" height="4" fill="#a0a0a0"/><rect x="95" y="10" width="1" height="4" fill="#a0a0a0"/><rect x="105" y="10" width="1" height="4" fill="#a0a0a0"/><rect x="115" y="0" width="1" height="14" fill="#a0a0a0"/><rect x="125" y="10" width="1" height="4" fill="#a0a0a0"/><rect x="135" y="10" width="1" height="4" fill="#a0a0a0"/><rect x="145" y="10" width="1" height="4" fill="#a0a0a0"/><rect x="155" y="10" width="1" height="4" fill="#a0a0a0"/><rect x="165" y="6" width="1" height="8" fill="#a0a0a0"/><rect x="175" y="10" width="1" height="4" fill="#a0a0a0"/><rect x="185" y="10" width="1" height="4" fill="#a0a0a0"/><rect x="195" y="10" width="1" height="4" fill="#a0a0a0"/><rect x="205" y="10" width="1" height="4" fill="#a0a0a0"/><rect x="215" y="0" width="1" height="14" fill="#a0a0a0"/><rect x="225" y="10" width="1" height="4" fill="#a0a0a0"/><rect x="235" y="10" width="1" height="4" fill="#a0a0a0"/><rect x="245" y="10" width="1" height="4" fill="#a0a0a0"/><rect x="255" y="10" width="1" height="4" fill="#a0a0a0"/><rect x="265" y="6" width="1" height="8" fill="#a0a0a0"/><rect x="275" y="10" width="1" height="4" fill="#a0a0a0"/><rect x="285" y="10" width="1" height="4" fill="#a0a0a0"/><rect x="295" y="10" width="1" height="4" fill="#a0a0a0"/><rect x="305" y="10" width="1" height="4" fill="#a0a0a0"/><rect x="315" y="0" width="1" height="14" fill="#a0a0a0"/><rect x="325" y="10" width="1" height="4" fill="#a0a0a0"/><rect x="335" y="10" width="1" height="4" fill="#a0a0a0"/><rect x="345" y="10" width="1" height="4" fill="#a0a0a0"/><rect x="355" y="10" width="1" height="4" fill="#a0a0a0"/><rect x="365" y="6" width="1" height="8" fill="#a0a0a0"/><rect x="375" y="10" width="1" height="4" fill="#a0a0a0"/><rect x="385" y="10" width="1" height="4" fill="#a0a0a0"/><rect x="395" y="10" width="1" height="4" fill="#a0a0a0"/><rect x="405" y="10" width="1" height="4" fill="#a0a0a0"/><rect x="415" y="0" width="1" height="14" fill="#a0a0a0"/><rect x="425" y="10" width="1" height="4" fill="#a0a0a0"/><rect x="435" y="10" width="1" height="4" fill="#a0a0a0"/><rect x="445" y="10" width="1" height="4" fill="#a0a0a0"/><rect x="455" y="10" width="1" height="4" fill="#a0a0a0"/><rect x="465" y="6" width="1" height="8" fill="#a0a0a0"/><rect x="475" y="10" width="1" height="4" fill="#a0a0a0"/><rect x="485" y="10" width="1" height="4" fill="#a0a0a0"/><rect x="495" y="10" width="1" height="4" fill="#a0a0a0"/><rect x="505" y="10" width="1" height="4" fill="#a0a0a0"/><rect x="515" y="0" width="1" height="14" fill="#a0a0a0"/><rect x="525" y="10" width="1" height="4" fill="#a0a0a0"/><rect x="535" y="10" width="1" height="4" fill="#a0a0a0"/><rect x="545" y="10" width="1" height="4" fill="#a0a0a0"/><rect x="555" y="10" width="1" height="4" fill="#a0a0a0"/><rect x="565" y="6" width="1" height="8" fill="#a0a0a0"/><rect x="575" y="10" width="1" height="4" fill="#a0a0a0"/><rect x="585" y="10" width="1" height="4" fill="#a0a0a0"/><rect x="595" y="10" width="1" height="4" fill="#a0a0a0"/><rect x="605" y="10" width="1" height="4" fill="#a0a0a0"/><rect x="615" y="0" width="1" height="14" fill="#a0a0a0"/><rect x="625" y="10" width="1" height="4" fill="#a0a0a0"/><rect x="635" y="10" width="1" height="4" fill="#a0a0a0"/><rect x="645" y="10" width="1" height="4" fill="#a0a0a0"/><rect x="655" y="10" width="1" height="4" fill="#a0a0a0"/><rect x="665" y="6" width="1" height="8" fill="#a0a0a0"/><rect x="675" y="10" width="1" height="4" fill="#a0a0a0"/><rect x="685" y="10" width="1" height="4" fill="#a0a0a0"/><rect x="695" y="10" width="1" height="4" fill="#a0a0a0"/><rect x="705" y="10" width="1" height="4" fill="#a0a0a0"/><rect x="15" y="14" width="691" height="1" fill="#a8a8a8"/></svg>
<div class="t" style="left:285px;top:174px;font-size:9px;color:#111">0</div>
<div class="t" style="left:385px;top:174px;font-size:9px;color:#111">100</div>
<div class="t" style="left:485px;top:174px;font-size:9px;color:#111">200</div>
<div class="t" style="left:585px;top:174px;font-size:9px;color:#111">300</div>
<div class="t" style="left:685px;top:174px;font-size:9px;color:#111">400</div>
<div class="t" style="left:785px;top:174px;font-size:9px;color:#111">500</div>
<div class="t" style="left:885px;top:174px;font-size:9px;color:#111">600</div>
<svg style="position:absolute;left:268px;top:187px;" width="15" height="521" viewBox="0 0 15 521"><rect x="0" y="0" width="14" height="1" fill="#a0a0a0"/><rect x="10" y="10" width="4" height="1" fill="#a0a0a0"/><rect x="10" y="20" width="4" height="1" fill="#a0a0a0"/><rect x="10" y="30" width="4" height="1" fill="#a0a0a0"/><rect x="10" y="40" width="4" height="1" fill="#a0a0a0"/><rect x="6" y="50" width="8" height="1" fill="#a0a0a0"/><rect x="10" y="60" width="4" height="1" fill="#a0a0a0"/><rect x="10" y="70" width="4" height="1" fill="#a0a0a0"/><rect x="10" y="80" width="4" height="1" fill="#a0a0a0"/><rect x="10" y="90" width="4" height="1" fill="#a0a0a0"/><rect x="0" y="100" width="14" height="1" fill="#a0a0a0"/><rect x="10" y="110" width="4" height="1" fill="#a0a0a0"/><rect x="10" y="120" width="4" height="1" fill="#a0a0a0"/><rect x="10" y="130" width="4" height="1" fill="#a0a0a0"/><rect x="10" y="140" width="4" height="1" fill="#a0a0a0"/><rect x="6" y="150" width="8" height="1" fill="#a0a0a0"/><rect x="10" y="160" width="4" height="1" fill="#a0a0a0"/><rect x="10" y="170" width="4" height="1" fill="#a0a0a0"/><rect x="10" y="180" width="4" height="1" fill="#a0a0a0"/><rect x="10" y="190" width="4" height="1" fill="#a0a0a0"/><rect x="0" y="200" width="14" height="1" fill="#a0a0a0"/><rect x="10" y="210" width="4" height="1" fill="#a0a0a0"/><rect x="10" y="220" width="4" height="1" fill="#a0a0a0"/><rect x="10" y="230" width="4" height="1" fill="#a0a0a0"/><rect x="10" y="240" width="4" height="1" fill="#a0a0a0"/><rect x="6" y="250" width="8" height="1" fill="#a0a0a0"/><rect x="10" y="260" width="4" height="1" fill="#a0a0a0"/><rect x="10" y="270" width="4" height="1" fill="#a0a0a0"/><rect x="10" y="280" width="4" height="1" fill="#a0a0a0"/><rect x="10" y="290" width="4" height="1" fill="#a0a0a0"/><rect x="0" y="300" width="14" height="1" fill="#a0a0a0"/><rect x="10" y="310" width="4" height="1" fill="#a0a0a0"/><rect x="10" y="320" width="4" height="1" fill="#a0a0a0"/><rect x="10" y="330" width="4" height="1" fill="#a0a0a0"/><rect x="10" y="340" width="4" height="1" fill="#a0a0a0"/><rect x="6" y="350" width="8" height="1" fill="#a0a0a0"/><rect x="10" y="360" width="4" height="1" fill="#a0a0a0"/><rect x="10" y="370" width="4" height="1" fill="#a0a0a0"/><rect x="10" y="380" width="4" height="1" fill="#a0a0a0"/><rect x="10" y="390" width="4" height="1" fill="#a0a0a0"/><rect x="0" y="400" width="14" height="1" fill="#a0a0a0"/><rect x="10" y="410" width="4" height="1" fill="#a0a0a0"/><rect x="10" y="420" width="4" height="1" fill="#a0a0a0"/><rect x="10" y="430" width="4" height="1" fill="#a0a0a0"/><rect x="10" y="440" width="4" height="1" fill="#a0a0a0"/><rect x="6" y="450" width="8" height="1" fill="#a0a0a0"/><rect x="10" y="460" width="4" height="1" fill="#a0a0a0"/><rect x="10" y="470" width="4" height="1" fill="#a0a0a0"/><rect x="10" y="480" width="4" height="1" fill="#a0a0a0"/><rect x="10" y="490" width="4" height="1" fill="#a0a0a0"/><rect x="0" y="500" width="14" height="1" fill="#a0a0a0"/><rect x="10" y="510" width="4" height="1" fill="#a0a0a0"/><rect x="10" y="520" width="4" height="1" fill="#a0a0a0"/><rect x="14" y="0" width="1" height="521" fill="#a8a8a8"/></svg>
<div class="t" style="left:269px;top:192px;font-size:9px;color:#111;writing-mode:vertical-rl;transform:rotate(180deg)">0</div>
<div class="t" style="left:269px;top:292px;font-size:9px;color:#111;writing-mode:vertical-rl;transform:rotate(180deg)">100</div>
<div class="t" style="left:269px;top:392px;font-size:9px;color:#111;writing-mode:vertical-rl;transform:rotate(180deg)">200</div>
<div class="t" style="left:269px;top:492px;font-size:9px;color:#111;writing-mode:vertical-rl;transform:rotate(180deg)">300</div>
<div class="t" style="left:269px;top:592px;font-size:9px;color:#111;writing-mode:vertical-rl;transform:rotate(180deg)">400</div>
<div class="t" style="left:269px;top:692px;font-size:9px;color:#111;writing-mode:vertical-rl;transform:rotate(180deg)">500</div>
<div style="position:absolute;left:957px;top:187px;width:17px;height:506px;background:#ebebeb"></div>
<svg style="position:absolute;left:960px;top:193px;" width="10" height="5" viewBox="0 0 10 5"><defs><linearGradient id="ga"><stop offset="0" stop-color="#555"/><stop offset="1" stop-color="#c8c8c8"/></linearGradient></defs><path d="M1 4.5L5.5 1L9 4.5Z" fill="url(#ga)"/></svg>
<div style="position:absolute;left:958px;top:204px;width:15px;height:11px;box-sizing:border-box;border:1px solid #999;border-radius:2px;background:linear-gradient(90deg,#fafafa,#cfcfcf)"></div>
<svg style="position:absolute;left:961px;top:682px;" width="8" height="5" viewBox="0 0 8 5"><path d="M0 0H8L4 4.5Z" fill="#666"/></svg>
<div style="position:absolute;left:283px;top:693px;width:674px;height:15px;background:#ebebeb"></div>
<svg style="position:absolute;left:289px;top:698px;" width="5" height="7" viewBox="0 0 5 7"><path d="M4.5 0V7L0 3.5Z" fill="#888"/></svg>
<div style="position:absolute;left:300px;top:694px;width:21px;height:14px;box-sizing:border-box;border:1px solid #999;border-bottom:none;border-radius:3px 3px 0 0;background:linear-gradient(180deg,#f6f6f6,#cfcfcf)"></div>
<svg style="position:absolute;left:305px;top:697px;" width="10" height="9" viewBox="0 0 10 9"><path d="M2.5 0.5L1.5 8.5M5.5 0.5L4.5 8.5M8.5 0.5L7.5 8.5" stroke="#555" stroke-width="1.3"/></svg>
<svg style="position:absolute;left:946px;top:697px;" width="5" height="8" viewBox="0 0 5 8"><path d="M0 0V8L4.5 4Z" fill="#666"/></svg>
<div style="position:absolute;left:957px;top:693px;width:17px;height:15px;background:#f0f0f0"></div>
<div style="position:absolute;left:974px;top:172px;width:2px;height:536px;background:#b0b0b0"></div>
<div style="position:absolute;left:976px;top:147px;width:267px;height:25px;background:#d9d9d9"></div>
<svg style="position:absolute;left:985px;top:155px;" width="10" height="10" viewBox="0 0 10 10"><path d="M1.5 1.1L8 7.6M1.5 1.1H7M1.5 1.1V6.8" fill="none" stroke="#b4b4b4" stroke-width="1.7"/></svg>
<div class="t" style="left:1084px;top:153px;font-size:11px;color:#111;-webkit-text-stroke-width:0.15px">检视: 页面</div>
<div style="position:absolute;left:976px;top:172px;width:267px;height:1px;background:#c9c9c9"></div>
<div style="position:absolute;left:976px;top:173px;width:267px;height:26px;background:#d9d9d9"></div>
<div style="position:absolute;left:976px;top:173px;width:89px;height:26px;background:#1b9dd8"></div>
<div style="position:absolute;left:1065px;top:173px;width:1px;height:26px;background:#f0f0f0"></div>
<div style="position:absolute;left:1154px;top:173px;width:1px;height:26px;background:#f0f0f0"></div>
<div class="t" style="left:1010px;top:181px;font-size:11px;color:#fff;-webkit-text-stroke-width:0.15px">属性</div>
<div class="t" style="left:1099px;top:181px;font-size:11px;color:#111;-webkit-text-stroke-width:0.15px">说明</div>
<div class="t" style="left:1188px;top:181px;font-size:11px;color:#111;-webkit-text-stroke-width:0.15px">样式</div>
<div style="position:absolute;left:976px;top:199px;width:267px;height:229px;background:#f3f3f3"></div>
<svg style="position:absolute;left:985px;top:215px;" width="9" height="6" viewBox="0 0 9 6"><path d="M0.75 0.75L4.5 4.5L8.25 0.75" fill="none" stroke="#444" stroke-width="1.5"/></svg>
<div class="t" style="left:1001px;top:212px;font-size:11px;color:#111;-webkit-text-stroke-width:0.15px">交互</div>
<svg style="position:absolute;left:988px;top:238px;" width="11" height="11" viewBox="0 0 11 11"><path d="M0 5.5H11M5.5 0V11" stroke="#6ab42d" stroke-width="3"/></svg>
<div class="t" style="left:1006px;top:236px;font-size:12px;color:#2a8fc6;text-decoration:underline;-webkit-text-stroke-width:0.15px">添加用例</div>
<svg style="position:absolute;left:1005px;top:265px;" width="14" height="14" viewBox="0 0 14 14"><rect x="1" y="1" width="12" height="5" fill="#66b800"/><path d="M6.4 2.3L6.5 11L8.5 9.4L10.3 12.7L11.8 12L10.1 8.8L12.7 8.6Z" fill="#6e6e6e" stroke="#fff" stroke-width="0.9" stroke-linejoin="round"/></svg>
<div class="t" style="left:1028px;top:268px;font-size:11px;color:#111;-webkit-text-stroke-width:0.15px">页面载入时</div>
<svg style="position:absolute;left:1005px;top:286px;" width="14" height="14" viewBox="0 0 14 14"><rect x="1" y="1" width="12" height="5" fill="#66b800"/><path d="M6.4 2.3L6.5 11L8.5 9.4L10.3 12.7L11.8 12L10.1 8.8L12.7 8.6Z" fill="#6e6e6e" stroke="#fff" stroke-width="0.9" stroke-linejoin="round"/></svg>
<div class="t" style="left:1028px;top:289px;font-size:11px;color:#111;-webkit-text-stroke-width:0.15px">窗口尺寸改变时</div>
<svg style="position:absolute;left:1005px;top:307px;" width="14" height="14" viewBox="0 0 14 14"><rect x="1" y="1" width="12" height="5" fill="#66b800"/><path d="M6.4 2.3L6.5 11L8.5 9.4L10.3 12.7L11.8 12L10.1 8.8L12.7 8.6Z" fill="#6e6e6e" stroke="#fff" stroke-width="0.9" stroke-linejoin="round"/></svg>
<div class="t" style="left:1028px;top:310px;font-size:11px;color:#111;-webkit-text-stroke-width:0.15px">窗口滚动时</div>
<div style="position:absolute;left:986px;top:341px;width:247px;height:22px;box-sizing:border-box;border:1px solid #c0c0c0"></div>
<div class="t" style="left:994px;top:346px;font-size:12px;color:#111;-webkit-text-stroke-width:0.15px">更多事件&gt;&gt;&gt;</div>
<svg style="position:absolute;left:1222px;top:351px;" width="8" height="4" viewBox="0 0 8 4"><path d="M0 0H8L4 4Z" fill="#777"/></svg>
<div style="position:absolute;left:976px;top:378px;width:267px;height:1px;background:#d4d4d4"></div>
<div class="t" style="left:987px;top:391px;font-size:11px;color:#111;-webkit-text-stroke-width:0.15px">自适应</div>
<div style="position:absolute;left:1160px;top:390px;width:13px;height:13px;box-sizing:border-box;border:1px solid #aaa;background:linear-gradient(135deg,#dcdcdc,#fff)"></div>
<div class="t" style="left:1177px;top:392px;font-size:11px;color:#111;-webkit-text-stroke-width:0.15px">启用</div>
<svg style="position:absolute;left:1215px;top:391px;" width="16" height="9" viewBox="0 0 16 9"><rect x="2" y="0" width="11" height="9" fill="#1e9ad6"/><rect x="0" y="3" width="4" height="6" fill="#8e8e8e"/><rect x="12.5" y="5.5" width="3" height="3.5" fill="#6e6e6e"/><rect x="5" y="6" width="2" height="2" fill="#f3f3f3"/><rect x="9.5" y="6" width="2" height="2" fill="#f3f3f3"/></svg>
<div style="position:absolute;left:976px;top:428px;width:267px;height:2px;background:#b5b5b5"></div>
<div style="position:absolute;left:976px;top:430px;width:267px;height:25px;background:#d9d9d9"></div>
<svg style="position:absolute;left:985px;top:436px;" width="10" height="10" viewBox="0 0 10 10"><path d="M1.5 1.1L8 7.6M1.5 1.1H7M1.5 1.1V6.8" fill="none" stroke="#b4b4b4" stroke-width="1.7"/></svg>
<div class="t" style="left:1083px;top:437px;font-size:11px;color:#111;-webkit-text-stroke-width:0.15px">概要: 页面</div>
<svg style="position:absolute;left:1198px;top:436px;" width="16" height="12" viewBox="0 0 16 12"><path d="M0.8 0.8H13.2L8.2 6V10.8H5.8V6Z" fill="#d9d9d9" stroke="#6a6a6a" stroke-width="1.6" stroke-linejoin="round"/><path d="M12.5 11.5V5.2M10.6 7.2L12.5 5.2L14.4 7.2" fill="none" stroke="#6a6a6a" stroke-width="1.1"/></svg>
<svg style="position:absolute;left:1222px;top:437px;" width="12" height="12" viewBox="0 0 12 12"><circle cx="4.8" cy="4.8" r="3.8" fill="none" stroke="#6b6b6b" stroke-width="1.8"/><path d="M7.5 7.5L11.3 11.3" stroke="#6b6b6b" stroke-width="2"/></svg>
<div style="position:absolute;left:976px;top:455px;width:267px;height:253px;background:#f3f3f3"></div>
<svg style="position:absolute;left:982px;top:459px;" width="10" height="12" viewBox="0 0 10 12"><path d="M0.5 0.5H5.5L8.5 3.5V11.5H0.5Z" fill="#fff" stroke="#555"/><path d="M5.5 0.5V3.5H8.5" fill="none" stroke="#555"/></svg>
<div class="t" style="left:1000px;top:460px;font-size:12px;font-weight:bold">index</div>
</body></html>
